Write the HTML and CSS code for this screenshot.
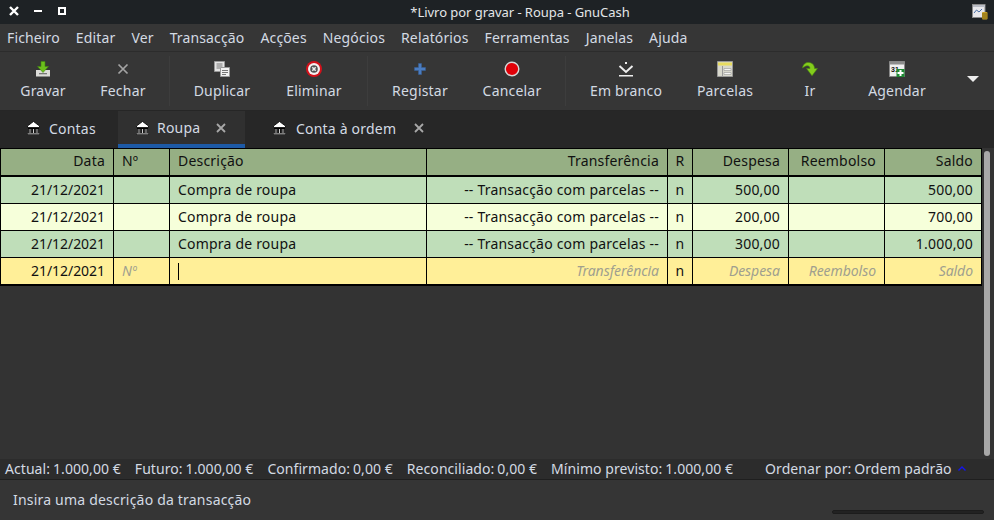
FILE: index.html
```html
<!DOCTYPE html>
<html lang="pt">
<head>
  <meta charset="UTF-8">
  <title>*Livro por gravar - Roupa - GnuCash</title>
  <link rel="stylesheet" href="styles.css">
</head>
<body>
  <svg class="defs" width="0" height="0">
    <symbol id="bank" viewBox="0 0 13 14">
      <path d="M6.500.5 12.500 5v1.500H.5V5z" fill="#fff" stroke="#000" stroke-width=".8"/>
      <path d="M1 7h11v1H1z" fill="#000"/>
      <path d="M0 12h13v2H0z" fill="#000"/>
      <path d="M.5 12.500h12v.8H.5z" fill="#fff"/>
      <path d="M2 8h2v4H2zM5.500 8h2v4h-2zM9 8h2v4H9z" fill="#000"/>
      <path d="M2.600 8h.8v4h-.8zM6.100 8h.8v4h-.8zM9.600 8h.8v4h-.8z" fill="#fff"/>
    </symbol>
    <symbol id="x" viewBox="0 0 12 12">
      <path d="M2 2l8 8M10 2l-8 8" stroke="#a8a8a8" stroke-width="1.800" fill="none"/>
    </symbol>
  </svg>

  <header class="titlebar">
    <div class="winbtns">
      <svg width="12" height="12" viewBox="0 0 12 12"><path d="M2 2l8 8M10 2l-8 8" stroke="#fff" stroke-width="2.400"/></svg>
      <span class="minbtn"></span>
      <span class="maxbtn"></span>
    </div>
    <div class="wintitle">*Livro por gravar - Roupa - GnuCash</div>
    <svg class="appicon" width="16" height="16" viewBox="0 0 16 16">
      <rect x=".5" y=".5" width="12.500" height="13" fill="#e8e8ec" stroke="#8a8a8a"/>
      <path d="M1 1h12v2H1z" fill="#b9bcc4"/>
      <path d="M2 9l2.500-3 2.500 2 3-3" stroke="#4a6fa5" fill="none"/>
      <rect x="10" y="8" width="5.500" height="7.500" rx="1" fill="#c9a227"/>
      <path d="M10 10h5.500M10 12h5.500M10 14h5.500" stroke="#7d6414"/>
    </svg>
  </header>

  <nav class="menubar">
    <span>Ficheiro</span><span>Editar</span><span>Ver</span><span>Transacção</span><span>Acções</span><span>Negócios</span><span>Relatórios</span><span>Ferramentas</span><span>Janelas</span><span>Ajuda</span>
  </nav>

  <div class="toolbar">
    <div class="tool w80">
      <svg width="16" height="16" viewBox="0 0 16 16">
        <path d="M1 9h14v6.500H1z" fill="#dcdcd8"/>
        <path d="M4 12h8v1.300H4z" fill="#777"/>
        <path d="M6 .5h4v5h3.500L8 11.500 2.500 5.500H6z" fill="#6cbe1c" stroke="#3f8a0c" stroke-width=".6"/>
      </svg>
      <span>Gravar</span>
    </div>
    <div class="tool w80">
      <svg width="12" height="16" viewBox="0 0 12 16"><path d="M1.500 3.500l9 9M10.500 3.500l-9 9" stroke="#a4a4a4" stroke-width="1.700"/></svg>
      <span>Fechar</span>
    </div>
    <i class="sep first-sep"></i>
    <div class="tool w92">
      <svg width="16" height="16" viewBox="0 0 16 16">
        <path d="M.5.500h10v10H.5z" fill="#e4e4e4" stroke="#999"/>
        <path d="M2.500 3h6M2.500 5h6M2.500 7h4" stroke="#777"/>
        <path d="M6.500 6.500h9v9h-9z" fill="#f2f2f2" stroke="#999"/>
        <path d="M8 9.500h6M8 11.500h6M8 13.500h4" stroke="#777"/>
      </svg>
      <span>Duplicar</span>
    </div>
    <div class="tool w92">
      <svg width="16" height="16" viewBox="0 0 16 16">
        <circle cx="8" cy="8" r="8" fill="#d4101a"/>
        <circle cx="8" cy="8" r="6" fill="#f4f0f0"/>
        <circle cx="8" cy="8" r="3.800" fill="#505050"/>
        <path d="M6.300 6.300l3.400 3.400M9.700 6.300l-3.400 3.400" stroke="#eee" stroke-width="1.500"/>
      </svg>
      <span>Eliminar</span>
    </div>
    <i class="sep"></i>
    <div class="tool w92">
      <svg width="12" height="16" viewBox="0 0 12 16"><path d="M4.500 2.500h3v4h4v3h-4v4h-3v-4h-4v-3h4z" fill="#4a7cc0" stroke="#37609a" stroke-width=".5"/></svg>
      <span>Registar</span>
    </div>
    <div class="tool w92">
      <svg width="16" height="16" viewBox="0 0 16 16">
        <circle cx="8" cy="8" r="6.800" fill="#e00008" stroke="#d8d8d8" stroke-width="1.400"/>
      </svg>
      <span>Cancelar</span>
    </div>
    <i class="sep"></i>
    <div class="tool w108">
      <svg width="16" height="16" viewBox="0 0 16 16">
        <path d="M7 1h2v2H7zM1 14h14v1.500H1z" fill="#eee"/>
        <path d="M1.500 5 8 11l6.500-6" stroke="#eee" stroke-width="2" fill="none"/>
      </svg>
      <span>Em branco</span>
    </div>
    <div class="tool w90">
      <svg width="16" height="16" viewBox="0 0 16 16">
        <path d="M.5.500h15v15H.5z" fill="#d8d8cc" stroke="#999"/>
        <path d="M1 1.500h14v3H1z" fill="#e8dc60"/>
        <path d="M5.500 5v10" stroke="#999"/>
        <path d="M7 7.500h7v2H7zM7 11.500h7v2H7z" fill="#f4f4f4" stroke="#888" stroke-width=".5"/>
      </svg>
      <span>Parcelas</span>
    </div>
    <div class="tool w80">
      <svg width="16" height="16" viewBox="0 0 16 16">
        <path d="M.5 7C1 2 6 0 10 2.500c2 1.300 2.500 3.500 2.500 5h3L10 14.800 4.500 7.500H8c0-2-1.500-3-3-2.700C3 5.200 2 6 .5 7z" fill="#84cc1c" stroke="#4a8a10" stroke-width=".6"/>
      </svg>
      <span>Ir</span>
    </div>
    <div class="tool w94">
      <svg width="16" height="16" viewBox="0 0 16 16">
        <path d="M.5.500h15v15H.5z" fill="#f0f0f0" stroke="#888"/>
        <path d="M1 1h14v2.500H1z" fill="#8c8c8c"/>
        <text x="2" y="10.500" class="caldate">31</text>
        <path d="M7.500 8h8v8h-8z" fill="#1e8a34"/>
        <path d="M10.500 9h2v2h2v2h-2v2h-2v-2h-2v-2h2z" fill="#fff"/>
      </svg>
      <span>Agendar</span>
    </div>
    <div class="more"></div>
  </div>

  <div class="tabs">
    <div class="tab first">
      <svg class="bank"><use href="#bank"/></svg>
      <span>Contas</span>
    </div>
    <div class="tab active">
      <svg class="bank"><use href="#bank"/></svg>
      <span>Roupa</span>
      <svg class="tabx"><use href="#x"/></svg>
    </div>
    <div class="tab third">
      <svg class="bank"><use href="#bank"/></svg>
      <span>Conta à ordem</span>
      <svg class="tabx"><use href="#x"/></svg>
    </div>
  </div>

  <main class="regarea">
    <div class="register">
      <div class="row head">
        <div class="r">Data</div><div>Nº</div><div>Descrição</div><div class="r">Transferência</div><div class="c">R</div><div class="r">Despesa</div><div class="r">Reembolso</div><div class="r">Saldo</div>
      </div>
      <div class="row green">
        <div class="r date">21/12/2021</div><div></div><div>Compra de roupa</div><div class="r">-- Transacção com parcelas --</div><div class="c">n</div><div class="r">500,00</div><div></div><div class="r">500,00</div>
      </div>
      <div class="row cream">
        <div class="r date">21/12/2021</div><div></div><div>Compra de roupa</div><div class="r">-- Transacção com parcelas --</div><div class="c">n</div><div class="r">200,00</div><div></div><div class="r">700,00</div>
      </div>
      <div class="row green">
        <div class="r date">21/12/2021</div><div></div><div>Compra de roupa</div><div class="r">-- Transacção com parcelas --</div><div class="c">n</div><div class="r">300,00</div><div></div><div class="r">1.000,00</div>
      </div>
      <div class="row edit">
        <div class="r date">21/12/2021</div><div class="hint">Nº</div><div><i class="caret"></i></div><div class="r hint">Transferência</div><div class="c">n</div><div class="r hint">Despesa</div><div class="r hint">Reembolso</div><div class="r hint">Saldo</div>
      </div>
    </div>
    <div class="thumb"></div>
  </main>

  <div class="summary">
    <div class="stat"><span>Actual:</span><span>1.000,00 €</span></div>
    <div class="stat"><span>Futuro:</span><span>1.000,00 €</span></div>
    <div class="stat"><span>Confirmado:</span><span>0,00 €</span></div>
    <div class="stat"><span>Reconciliado:</span><span>0,00 €</span></div>
    <div class="stat"><span>Mínimo previsto:</span><span>1.000,00 €</span></div>
    <div class="stat sort">
      <span>Ordenar por:</span><span>Ordem padrão</span>
      <svg width="8" height="5" viewBox="0 0 8 5"><path d="M.5 4.500 4 1l3.500 3.500" stroke="#1414f0" stroke-width="1.400" fill="none"/></svg>
    </div>
  </div>

  <footer class="status">
    <span>Insira uma descrição da transacção</span>
    <div class="progress"></div>
  </footer>
</body>
</html>
```
FILE: styles.css
```css
*{box-sizing:border-box}
html,body{height:100%}
body{
  margin:0;width:994px;height:520px;overflow:hidden;
  display:flex;flex-direction:column;
  background:#353535;color:#d3dae3;
  font-family:"Noto Sans",sans-serif;font-size:14px;line-height:19px;letter-spacing:.2px;
}
.defs{position:absolute}

.titlebar{
  height:24px;flex:none;display:flex;align-items:center;justify-content:center;padding-left:46px;
  background:#1e2225;color:#e4e6e8;font-size:13px;letter-spacing:-.05px;
}
.winbtns{position:absolute;left:8px;top:5px;display:flex;align-items:center;gap:14px}
.minbtn{width:8px;height:2px;background:#fff}
.maxbtn{width:8px;height:8px;border:2px solid #fff;margin-left:2px}
.appicon{position:absolute;right:6px;top:4px}

.menubar{
  height:28px;flex:none;display:flex;align-items:center;padding-left:7px;gap:16px;
  background:#363636;border-bottom:1px solid #2c2c2c;letter-spacing:.14px;
}

.toolbar{
  height:59px;flex:none;display:flex;padding:4px 0 0 3px;
  background:#363636;border-bottom:1px solid #262626;
}
.tool{display:flex;flex-direction:column;align-items:center;padding-top:5px;height:50px}
.tool svg{height:16px;flex:none}
.tool span{margin-top:4px}
.w80{width:80px}
.w90{width:90px}
.w92{width:92px}
.w94{width:94px}
.w108{width:108px}
.sep{width:1px;height:50px;background:#3d3d3d;margin:0 6px 0 7px}
.first-sep{margin-left:6px}
.caldate{font-family:"Liberation Sans",sans-serif;font-size:7px;font-weight:bold;fill:#111}
.more{
  width:0;height:0;margin:20px 0 0 23px;
  border-left:6px solid transparent;border-right:6px solid transparent;border-top:6px solid #eee;
}

.tabs{height:37px;flex:none;display:flex;background:#272727}
.tab{display:flex;align-items:center;height:37px;padding-bottom:3px}
.tab.first{width:118px;padding-left:27px}
.tab.active{width:127px;padding-left:18px;background:#303030;border-bottom:4px solid #1d5aa6;padding-bottom:0}
.tab.third{padding-left:28px}
.bank{width:13px;height:14px;margin-right:9px;flex:none}
.tab.active .bank{margin-right:8px}
.tab.third .bank{margin-right:10px}
.tabx{width:12px;height:12px;margin-left:15px;flex:none}
.tab.third .tabx{margin-left:17px}

.regarea{flex:1;display:flex;align-items:flex-start;background:#333;position:relative}
.register{width:982px;background:#000;border:solid #000;border-width:1px 1px 2px 1px;display:flex;flex-direction:column;gap:1px}
.row{
  display:grid;grid-template-columns:112px 55px 256px 240px 24px 95px 95px 96px;column-gap:1px;
  height:26px;color:#111;
}
.row>div{padding:0 8px;line-height:25px;overflow:hidden;white-space:nowrap}
.row .r{text-align:right}
.row .c{text-align:center;padding:0}
.row .date{letter-spacing:-.05px}
.head{margin-bottom:1px}
.head>div{background:#96af84;line-height:23px}
.green>div{background:#bfdeb9}
.cream>div{background:#f6ffda}
.edit>div{background:#ffef98}
.row>.hint{color:#a09f8f;font-style:italic;letter-spacing:-.05px}
.caret{display:inline-block;width:1px;height:17px;background:#000;vertical-align:-4px}
.thumb{position:absolute;left:984px;top:3px;bottom:3px;width:6px;background:#a8a8a8;border-radius:3px}

.summary{
  height:21px;flex:none;display:flex;align-items:center;padding:0 0 1px 5px;gap:14px;
  background:#2c2c2c;border-bottom:1px solid #1f1f1f;letter-spacing:.06px;
}
.stat{display:flex;align-items:center;gap:3px}
.sort{margin-left:18px}
.sort svg{margin-left:3px}
.status{height:40px;flex:none;padding:10px 0 0 13px;background:#353535;position:relative}
.progress{position:absolute;left:832px;top:30px;width:152px;height:4px;background:#222;border:1px solid #1c1c1c;border-radius:2px}
```
